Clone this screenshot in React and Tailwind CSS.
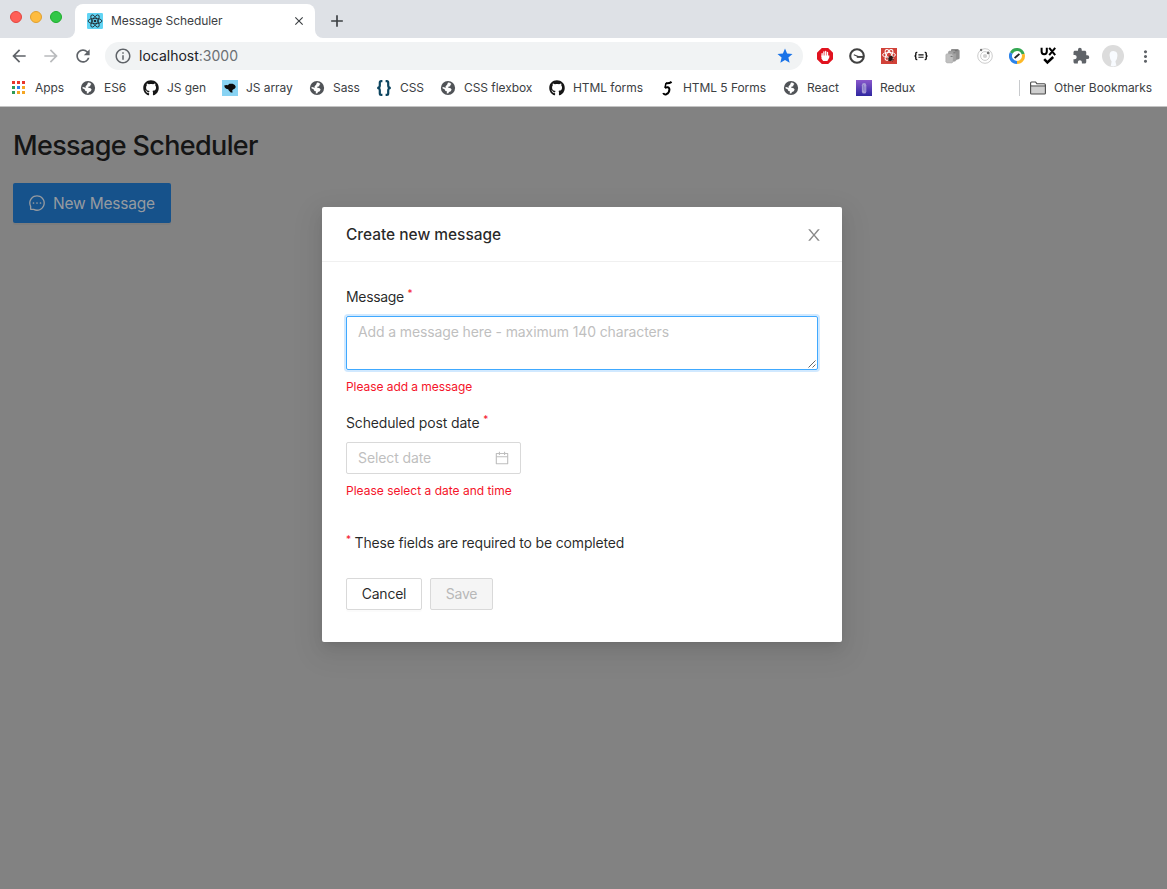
import React from "react";
import {
  MdArrowBack,
  MdArrowForward,
  MdRefresh,
  MdInfoOutline,
  MdStar,
  MdMoreVert,
  MdExtension,
  MdClose,
  MdAdd,
} from "react-icons/md";
import { AiOutlineMessage, AiOutlineCalendar } from "react-icons/ai";
import { FaGithub } from "react-icons/fa";

const Globe = () => (
  <svg viewBox="0 0 16 16" className="size-4">
    <circle cx="8" cy="8" r="7.1" fill="#505357" />
    <path
      d="M8 2.5 9.8 2.7 11.4 4 10.4 5 10.2 6.2 8.4 6.7 8 7.6 10.6 8.2 11.6 9.6 10.8 11.3 9 12 8.2 13.4 6.6 13.2 7.1 11.6 5.4 11 4.8 9.6 2.5 8.3 2.6 7 4.2 7.2 5.6 8 5.6 6.2 7.1 4.7Z"
      fill="#fff"
    />
  </svg>
);

const AppsIcon = () => (
  <svg viewBox="0 0 16 16" className="size-4">
    {[
      [1, 1, "#e8352b"], [6, 1, "#e8352b"], [11, 1, "#e8352b"],
      [1, 6, "#2e9b57"], [6, 6, "#2a7de9"], [11, 6, "#f5a623"],
      [1, 11, "#2e9b57"], [6, 11, "#f5a623"], [11, 11, "#f5a623"],
    ].map(([x, y, c]) => (
      <rect key={`${x}-${y}`} x={x} y={y} width="3" height="3" fill={c} />
    ))}
  </svg>
);

const RhinoIcon = () => (
  <svg viewBox="0 0 16 16" className="size-4">
    <rect width="16" height="16" fill="#88d3f3" />
    <path d="M2.2 5.4 4.4 4.9 5.8 5.2 7.4 3.8 10.6 3.8 12.8 5 13.8 7 12.6 8.8 11 9.6 10.2 10.6 10.6 12.6 8.8 12.4 6.8 10.6 6.2 9.2 4.2 8.8 2.8 7.6Z" fill="#0b0b0b" />
  </svg>
);

const BracesIcon = () => (
  <svg viewBox="0 0 16 16" className="size-4" fill="none" stroke="#0d4560" strokeWidth="2.2">
    <path d="M6.4 1.1H5.2Q3.8 1.1 3.8 2.5V5.6Q3.8 8 1.2 8Q3.8 8 3.8 10.4V13.5Q3.8 14.9 5.2 14.9H6.4" />
    <path d="M9.6 1.1H10.8Q12.2 1.1 12.2 2.5V5.6Q12.2 8 14.8 8Q12.2 8 12.2 10.4V13.5Q12.2 14.9 10.8 14.9H9.6" />
  </svg>
);

const FiveIcon = () => (
  <svg viewBox="0 0 16 16" className="size-4" fill="none" stroke="#000">
    <path d="M7 3.1Q9.8 3.7 12.6 1.8" strokeWidth="2.2" />
    <path d="M7 3 6 7.8" strokeWidth="1.5" />
    <path d="M5.8 7.7Q9.6 6.2 10.4 9Q10.6 12.6 7.4 14.2Q5 15 4.2 13" strokeWidth="2" />
  </svg>
);

const ClipIcon = () => (
  <svg viewBox="0 0 16 16" className="size-4">
    <defs>
      <linearGradient id="violet" x1="0" y1="0" x2="0" y2="1">
        <stop offset="0" stopColor="#8a58cc" />
        <stop offset="1" stopColor="#2f27a0" />
      </linearGradient>
    </defs>
    <rect width="16" height="16" fill="url(#violet)" />
    <rect x="5.9" y="3" width="4.4" height="10.6" rx="2.2" fill="#a79bd8" />
    <path d="M7.4 5V10.5M8.9 6.5V11.8" stroke="#7466c0" strokeWidth=".6" />
  </svg>
);

const ReactFavicon = () => (
  <svg viewBox="0 0 16 16" className="size-4">
    <rect width="16" height="16" rx="1.2" fill="#61d4f4" />
    <g fill="none" stroke="#20292f" strokeWidth=".85">
      <ellipse cx="8" cy="8" rx="2.7" ry="6.9" transform="rotate(30 8 8)" />
      <ellipse cx="8" cy="8" rx="6.9" ry="2.7" />
      <ellipse cx="8" cy="8" rx="2.7" ry="6.9" transform="rotate(-30 8 8)" />
    </g>
    <circle cx="8" cy="8" r="1.3" fill="#20292f" />
  </svg>
);

const StopHandIcon = () => (
  <svg viewBox="0 0 16 16" className="size-4">
    <path d="M4.8 0h6.4L16 4.8v6.4L11.2 16H4.8L0 11.2V4.8Z" fill="#e1131f" />
    <path d="M5.1 8.6V5.6M6.9 8V3.8M8.7 8V3.4M10.5 8.4V4.4" stroke="#fff" strokeWidth="1.3" strokeLinecap="round" />
    <path d="M4.5 7.6H11.1L12.4 7.6 12.2 9.8 10.4 12.9H6.2L4.5 10.8Z" fill="#fff" />
  </svg>
);

const GaugeIcon = () => (
  <svg viewBox="0 0 16 16" className="size-4" fill="none" stroke="#414141">
    <circle cx="8" cy="8" r="6.8" strokeWidth="2.1" />
    <path d="M4.8 6.7 10.4 8.9" strokeWidth="1.1" />
    <path d="M7.8 8.9H14.6" strokeWidth="1.9" />
  </svg>
);

const ReactBugIcon = () => (
  <svg viewBox="0 0 16 16" className="size-4">
    <rect width="16" height="16" fill="#d14239" />
    <g fill="none" stroke="#fff" strokeWidth="1">
      <ellipse cx="8" cy="6.9" rx="6.4" ry="2.5" />
      <ellipse cx="8" cy="6.9" rx="6" ry="2.5" transform="rotate(60 8 6.9)" />
      <ellipse cx="8" cy="6.9" rx="6" ry="2.5" transform="rotate(120 8 6.9)" />
    </g>
    <ellipse cx="9.6" cy="10.4" rx="1.9" ry="2.8" fill="#2b1513" transform="rotate(25 9.6 10.4)" />
    <path d="M6.5 9.8 12.8 11.8M7 12.4 12.6 9M8.4 7.6 11.4 13.4" stroke="#2b1513" strokeWidth=".9" />
  </svg>
);

const JsonIcon = () => (
  <svg viewBox="0 0 16 16" className="size-4" fill="none" stroke="#111" strokeWidth="1.4">
    <path d="M4.3 4.4H3.6Q2.8 4.4 2.8 5.4V7Q2.8 8 1.5 8Q2.8 8 2.8 9V10.6Q2.8 11.6 3.6 11.6H4.3" />
    <path d="M11.7 4.4H12.4Q13.2 4.4 13.2 5.4V7Q13.2 8 14.5 8Q13.2 8 13.2 9V10.6Q13.2 11.6 12.4 11.6H11.7" />
    <path d="M5.4 6.9H10.6M5.4 9.3H10.6" strokeWidth="1.1" />
  </svg>
);

const CubesIcon = () => (
  <svg viewBox="0 0 16 16" className="size-4">
    <path d="M6 1.6 7 1H13L14.6 2.4V10.4L13 11.4H6Z" fill="#8e8e8e" />
    <path d="M3.4 3.8 4.4 3H10L11.4 4.4V12L10 13.2H3.4Z" fill="#a2a2a2" stroke="#858585" strokeWidth=".4" />
    <path d="M.8 6.6 1.8 5.8H6.8L8.2 7.2V14L6.8 15H2L.8 14Z" fill="#c0c0c0" stroke="#9c9c9c" strokeWidth=".4" />
    <path d="M8.4 4.8H10.6M5.6 8.4H7.6M9.8 2.6H12.6" stroke="#6c6c6c" strokeWidth=".9" />
  </svg>
);

const OrbitIcon = () => (
  <svg viewBox="0 0 16 16" className="size-4" fill="none" stroke="#c6c6c6">
    <circle cx="8" cy="8" r="7.3" strokeWidth=".9" />
    <circle cx="8" cy="8" r="4.4" strokeWidth=".9" />
    <circle cx="8" cy="8" r="2.1" fill="#d2d2d2" stroke="none" />
    <circle cx="4.1" cy="2" r="1.2" fill="#777" stroke="none" />
    <circle cx="11.2" cy="4.9" r="1.4" fill="#777" stroke="none" />
  </svg>
);

const CompassIcon = () => (
  <svg viewBox="0 0 16 16" className="size-4" fill="none" strokeWidth="3">
    <path d="M2.2 5A6.5 6.5 0 0 1 14.2 6.2" stroke="#35a853" />
    <path d="M14.2 6.2A6.5 6.5 0 0 1 8 14.5" stroke="#fdb928" />
    <path d="M8 14.5A6.5 6.5 0 0 1 2.2 5" stroke="#2b83ea" />
    <path d="M5.6 10.2 10.4 5.8" stroke="#222" strokeWidth="1.8" />
  </svg>
);

const UxIcon = () => (
  <svg viewBox="0 0 18 18" className="size-[18px]" fill="none" stroke="#000" strokeWidth="2">
    <path d="M2.6 .8V4.6Q2.6 7.2 5.2 7.2T7.8 4.6V.8M10.2 .8 16.2 8.2M16.2 .8 10.2 8.2" />
    <path d="M5.2 12.2 8.4 15.4 14.2 10" strokeWidth="2.5" />
  </svg>
);

const AvatarIcon = () => (
  <svg viewBox="0 0 22 22" className="size-[22px]">
    <circle cx="11" cy="11" r="11" fill="#dcdcdc" />
    <path d="M7.6 10.6Q7.2 6.2 11.4 6Q15.8 6.2 15.4 11Q15.2 14.6 13.4 16.4L14.4 20.6Q12 22 8.8 21L9.6 16.6Q7.8 14 7.6 10.6Z" fill="#f8fbff" />
  </svg>
);

const FolderIcon = () => (
  <svg viewBox="0 0 16 14" className="h-[14px] w-4" fill="#cfcfcf" stroke="#4b4b4b" strokeWidth="1.1">
    <path d="M.6 12.2V2Q.6 1 1.6 1H5.6L7 2.9H14.4Q15.4 2.9 15.4 3.9V12.2Q15.4 13 14.4 13H1.6Q.6 13 .6 12.2Z" />
    <path d="M.6 4.9H15.4" />
    <path d="M1.4 1.7H5.2L6.4 3.4H14.6V4.2H1.4Z" fill="#fff" stroke="none" />
  </svg>
);

const ModalCloseIcon = () => (
  <svg viewBox="64 64 896 896" className="size-4" fill="#8a8a8a">
    <path d="M563.8 512l262.5-312.9c4.4-5.2.7-13.1-6.1-13.1h-79.8c-4.7 0-9.2 2.1-12.3 5.7L511.6 449.8 295.1 191.7c-3-3.6-7.5-5.7-12.3-5.7H203c-6.8 0-10.5 7.9-6.1 13.1L459.4 512 196.9 824.9A7.95 7.95 0 0 0 203 838h79.8c4.7 0 9.2-2.1 12.3-5.7l216.5-258.1 216.5 258.1c3 3.6 7.5 5.7 12.3 5.7h79.8c6.8 0 10.5-7.9 6.1-13.1L563.8 512z" />
  </svg>
);

const bookmarks = [
  { label: "Apps", width: "w-[69px]", icon: <AppsIcon /> },
  { label: "ES6", width: "w-[63px]", icon: <Globe /> },
  { label: "JS gen", width: "w-[79px]", icon: <FaGithub className="size-4 text-[#161616]" /> },
  { label: "JS array", width: "w-[87px]", icon: <RhinoIcon /> },
  { label: "Sass", width: "w-[67px]", icon: <Globe /> },
  { label: "CSS", width: "w-[64px]", icon: <BracesIcon /> },
  { label: "CSS flexbox", width: "w-[109px]", icon: <Globe /> },
  { label: "HTML forms", width: "w-[110px]", icon: <FaGithub className="size-4 text-[#161616]" /> },
  { label: "HTML 5 Forms", width: "w-[124px]", icon: <FiveIcon /> },
  { label: "React", width: "w-[73px]", icon: <Globe /> },
  { label: "Redux", width: "w-[70px]", icon: <ClipIcon /> },
];

function BrowserChrome() {
  return (
    <header className="shrink-0 border-b border-[#c4c4c4] bg-white text-xs tracking-[-0.06px] text-[#3c4043]">
      <div className="flex h-[38px] items-end bg-[#dee1e6]">
        <div className="flex w-[67px] gap-2 self-start pt-[11px] pl-[10px]">
          <span className="size-3 rounded-full border border-[#e2463f] bg-[#ff5f57]" />
          <span className="size-3 rounded-full border border-[#e0a030] bg-[#febc40]" />
          <span className="size-3 rounded-full border border-[#1dad2b] bg-[#33c748]" />
        </div>
        <div className="size-2 bg-white">
          <div className="size-2 rounded-br-lg bg-[#dee1e6]" />
        </div>
        <div className="flex h-[34px] w-60 items-center rounded-t-lg bg-white pr-[9px] pl-3">
          <ReactFavicon />
          <span className="ml-2 flex-1 whitespace-nowrap">Message Scheduler</span>
          <MdClose className="size-[14px] text-[#3c4043]" />
        </div>
        <div className="size-2 bg-white">
          <div className="size-2 rounded-bl-lg bg-[#dee1e6]" />
        </div>
        <MdAdd className="mb-[7px] ml-1 size-5" />
      </div>

      <div className="flex h-9 items-center text-[#5f6368]">
        <MdArrowBack className="ml-[9px] size-5" />
        <MdArrowForward className="ml-3 size-5 text-[#b9bbbd]" />
        <MdRefresh className="ml-3 size-5" />
        <div className="ml-3 flex h-7 w-[698px] items-center rounded-full bg-[#f1f3f4] pr-[9px] pl-[9px]">
          <MdInfoOutline className="size-[18px]" />
          <span className="ml-[7px] flex-1 text-sm tracking-normal text-[#6b6f73]">
            <span className="text-[#202124]">localhost</span>:3000
          </span>
          <MdStar className="size-[18px] text-[#1a73e8]" />
        </div>
        <div className="ml-[14px] flex items-center gap-4">
          <StopHandIcon />
          <GaugeIcon />
          <ReactBugIcon />
          <JsonIcon />
          <CubesIcon />
          <OrbitIcon />
          <CompassIcon />
        </div>
        <div className="ml-[14px] flex items-center">
          <UxIcon />
          <MdExtension className="ml-[15px] size-[18px]" />
          <span className="ml-3"><AvatarIcon /></span>
          <MdMoreVert className="ml-3 size-[19px]" />
        </div>
      </div>

      <div className="flex h-8 items-center pb-1 pl-[11px] whitespace-nowrap">
        {bookmarks.map((b) => (
          <div key={b.label} className={`flex shrink-0 items-center gap-2 ${b.width}`}>
            {b.icon}
            <span>{b.label}</span>
          </div>
        ))}
        <div className="ml-auto flex items-center border-l border-[#c8cacd] pr-[15px] pl-[10px]">
          <FolderIcon />
          <span className="ml-2">Other Bookmarks</span>
        </div>
      </div>
    </header>
  );
}

const Required = () => <span className="relative -top-[5px] text-[10px] text-[#f5142a]">*</span>;

function Modal() {
  return (
    <section className="absolute top-[207px] left-[322px] h-[435px] w-[520px] rounded-xs bg-white text-sm tracking-[-0.15px] text-black/85 shadow-[0_3px_6px_-4px_rgba(0,0,0,.12),0_6px_16px_0_rgba(0,0,0,.08),0_9px_28px_8px_rgba(0,0,0,.05)]">
      <div className="flex h-[55px] items-center justify-between border-b border-[#f0f0f0] pr-5 pl-6">
        <h2 className="pt-[2px] text-[15.5px] leading-[22px] font-medium tracking-[-0.03px]">Create new message</h2>
        <span className="pt-px"><ModalCloseIcon /></span>
      </div>
      <form className="flex flex-col p-6 leading-[22px]">
        <label className="h-[22px] tracking-[-0.32px]">Message <Required /></label>
        <div className="relative mt-2 h-[54px] rounded-xs border border-[#40a9ff] px-[11px] py-1 tracking-[-0.12px] text-[#bfbfbf] shadow-[0_0_0_2px_rgba(24,144,255,.2)]">
          Add a message here - maximum 140 characters
          <svg viewBox="0 0 8 8" className="absolute right-px bottom-px size-2" stroke="#555" strokeWidth=".9">
            <path d="M.5 7.5 7.5.5M4.5 7.5 7.5 4.5" />
          </svg>
        </div>
        <p className="mt-[6px] h-[22px] text-xs leading-[22px] tracking-[-0.06px] text-[#f5142a]">Please add a message</p>
        <label className="mt-[14px] h-[22px]">Scheduled post date <Required /></label>
        <div className="mt-2 flex h-8 w-[175px] items-center justify-between rounded-xs border border-[#d9d9d9] pr-[10px] pl-[11px] tracking-[-0.1px] text-[#bfbfbf]">
          Select date
          <AiOutlineCalendar className="size-4" />
        </div>
        <p className="mt-[6px] h-[22px] text-xs leading-[22px] tracking-normal text-[#f5142a]">Please select a date and time</p>
        <p className="mt-[30px] h-[22px] tracking-[-0.17px]"><Required /> These fields are required to be completed</p>
        <div className="mt-6 flex gap-2">
          <button type="button" className="h-8 w-[76px] rounded-xs border border-[#d9d9d9] tracking-[-0.25px] shadow-[0_2px_0_rgba(0,0,0,.016)]">Cancel</button>
          <button type="button" className="h-8 w-[63px] rounded-xs border border-[#d9d9d9] bg-[#f5f5f5] tracking-[-0.25px] text-[#b8b8b8]">Save</button>
        </div>
      </form>
    </section>
  );
}

export default function App() {
  return (
    <div className="relative flex h-[889px] w-[1167px] flex-col overflow-hidden bg-[#828282] font-['Inter',sans-serif]">
      <BrowserChrome />
      <main className="flex-1 px-[13px] pt-5">
        <h1 className="text-[27px] leading-[38px] font-medium tracking-[-0.65px] text-[#151515]">Message Scheduler</h1>
        <button type="button" className="mt-[18px] flex h-10 w-[158px] items-center rounded-xs bg-[#16528b] pl-[15px] text-[15.5px] tracking-[-0.2px] text-[#979ba0] shadow-[0_2px_0_rgba(0,0,0,.035)]">
          <AiOutlineMessage className="size-[18px]" />
          <span className="ml-[7px] pt-[2px] whitespace-nowrap">New Message</span>
        </button>
      </main>
      <Modal />
    </div>
  );
}
